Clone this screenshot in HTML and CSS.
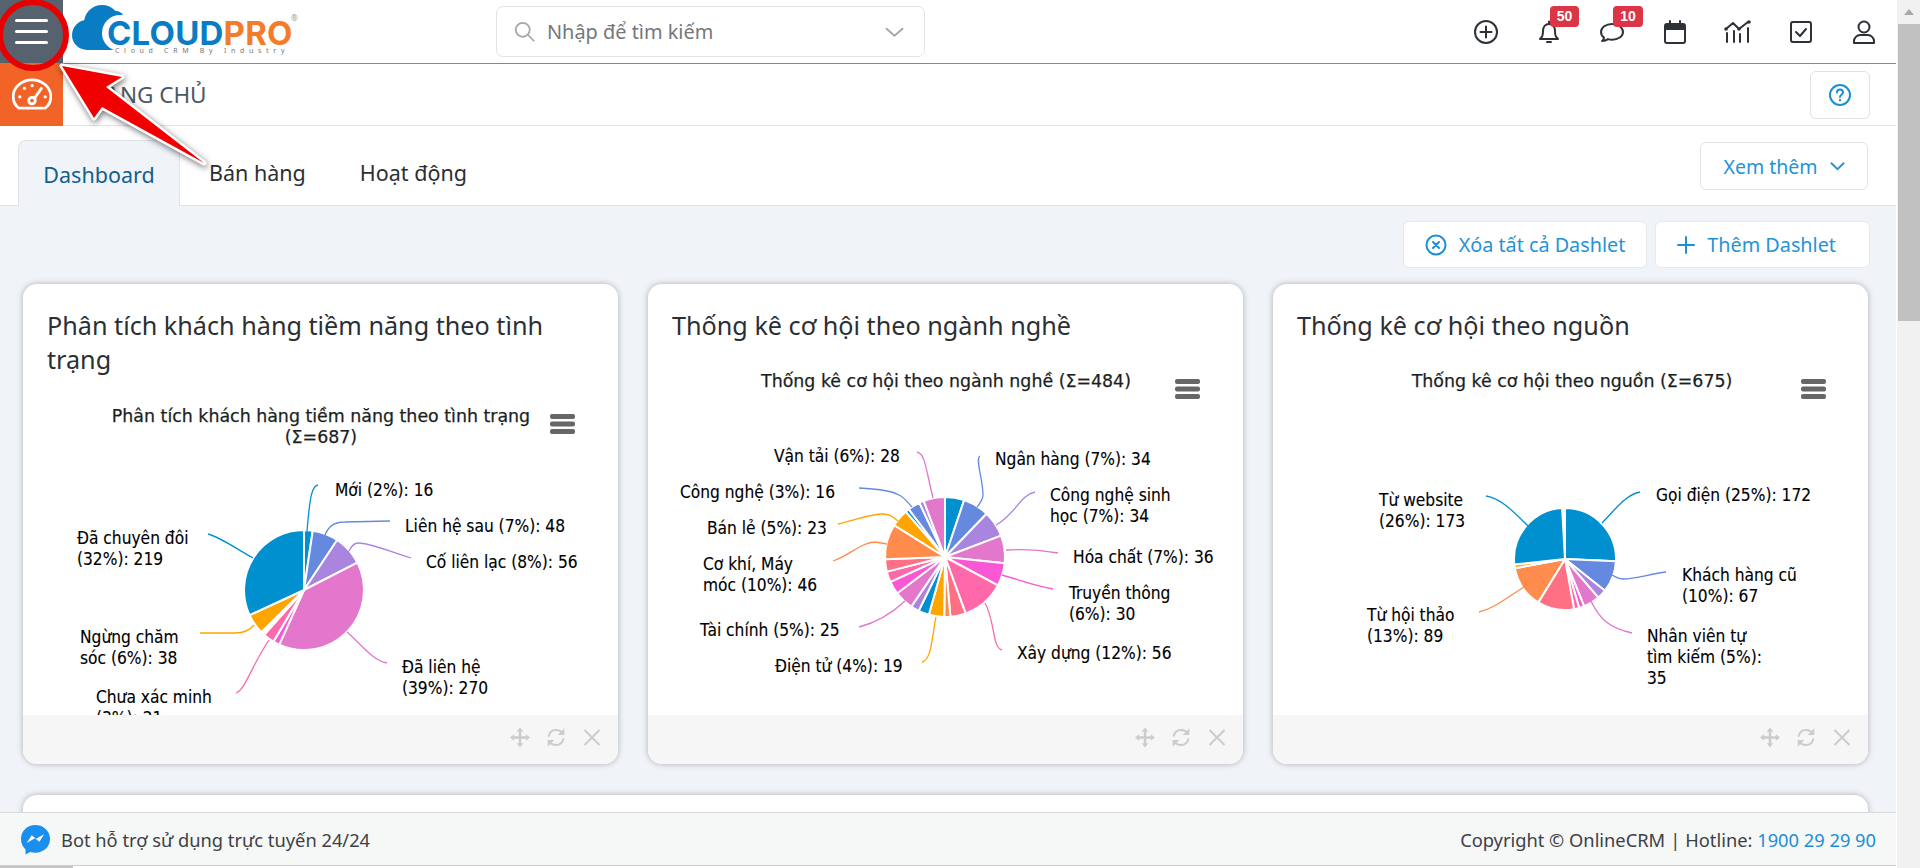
FILE: index.html
```html
<!DOCTYPE html>
<html lang="vi">
<head>
<meta charset="utf-8">
<title>CloudPro - Trang chủ</title>
<link rel="stylesheet" href="styles.css">
</head>
<body>
<div class="shell">
  <div class="page">
    <header class="topbar">
      <button class="menu-btn" aria-label="Menu"><span></span><span></span><span></span></button>
      <a class="logo">
        <svg class="logo-cloud" viewBox="0 0 60 48"><g class="logo-blue"><circle cx="15" cy="30" r="15"/><circle cx="30" cy="18" r="18"/><circle cx="44" cy="14" r="8"/><rect x="15" y="25" width="35" height="20"/></g><circle class="logo-cut" cx="48" cy="28" r="18"/></svg>
        <span class="logo-text"><span class="logo-c">CLOUD</span><span class="logo-p">PRO</span></span>
        <span class="logo-r">®</span>
        <span class="logo-tag">Cloud CRM By Industry</span>
      </a>
      <div class="search">
        <svg class="search-ico" viewBox="0 0 24 24"><circle cx="10" cy="10" r="8"/><path d="M16 16l7 7"/></svg>
        <span class="search-text">Nhập để tìm kiếm</span>
        <svg class="search-chev" viewBox="0 0 20 12"><path d="M1 2l9 8 9-8"/></svg>
      </div>
      <nav class="top-icons">
        <a class="top-icon"><svg viewBox="0 0 24 24"><circle cx="12" cy="12" r="11"/><path d="M12 6.500v11M6.500 12h11"/></svg></a>
        <a class="top-icon"><svg viewBox="0 0 24 24"><path d="M3 19c2-2 3-3 3-8 0-4 2.500-7 6-7s6 3 6 7c0 5 1 6 3 8z"/><path d="M12 1.500V4M10 22h4"/></svg><span class="badge">50</span></a>
        <a class="top-icon"><svg viewBox="0 0 24 24"><path d="M12 4C6 4 1 7.500 1 12c0 2.300 1.200 4.200 3 5.600-.2 1.500-1 2.800-2 3.400 2.500 0 4.600-.8 6-1.900 1.300.4 2.600.6 4 .6 6 0 11-3.200 11-7.700S18 4 12 4z"/></svg><span class="badge badge-chat">10</span></a>
        <a class="top-icon"><svg viewBox="0 0 24 24"><rect x="2" y="4" width="20" height="19" rx="2"/><path class="ico-solid" d="M2 4h20v6H2z"/><path d="M7 1v4M17 1v4"/></svg></a>
        <a class="top-icon"><svg viewBox="0 0 28 24"><path d="M2 9l7-6 6 6 9-7M3 13v9M10 11v11M16 14v8M24 8v14" /><circle class="ico-solid" cx="2" cy="9" r="1.800"/><circle class="ico-solid" cx="15" cy="9" r="1.800"/><circle class="ico-solid" cx="25" cy="2" r="1.800"/></svg></a>
        <a class="top-icon"><svg viewBox="0 0 24 24"><rect x="2" y="2" width="20" height="20" rx="2"/><path d="M7 12l4 4 6-7"/></svg></a>
        <a class="top-icon"><svg viewBox="0 0 24 24"><circle cx="12" cy="7" r="5.500"/><path d="M2 23v-2c0-3 3-6 6-6h8c3 0 6 3 6 6v2z"/></svg></a>
      </nav>
    </header>

    <div class="subbar">
      <div class="module-ico">
        <svg viewBox="0 0 42 34"><path d="M9 32h24M7 32C3 29 1 25 1 20 1 10 10 2 21 2s20 8 20 18c0 5-2 9-6 12"/><circle cx="21" cy="24" r="3.500"/><path d="M24 21l7-10"/><path class="dots" d="M8 20h.1M13 11h.1M21 8h.1M35 20h.1"/></svg>
      </div>
      <h1 class="module-title">TRANG CHỦ</h1>
      <button class="help-btn" aria-label="Trợ giúp"><svg viewBox="0 0 24 24"><circle cx="12" cy="12" r="10"/><path d="M9 9.500c0-2 1.300-3 3-3s3 1 3 2.800c0 2.400-3 2.400-3 4.700M12 16.800v.8"/></svg></button>
    </div>

    <div class="tabbar">
      <a class="tab tab-active">Dashboard</a>
      <a class="tab">Bán hàng</a>
      <a class="tab">Hoạt động</a>
      <button class="more-btn">Xem thêm <svg viewBox="0 0 16 10"><path d="M1 1.500l7 7 7-7"/></svg></button>
    </div>

    <main class="content">
      <div class="actions">
        <button class="action-btn"><svg viewBox="0 0 22 22"><circle cx="11" cy="11" r="9.500"/><path d="M8 8l6 6M14 8l-6 6"/></svg>Xóa tất cả Dashlet</button>
        <button class="action-btn action-add"><svg class="plus" viewBox="0 0 18 18"><path d="M9 1v16M1 9h16"/></svg>Thêm Dashlet</button>
      </div>

      <div class="cards">
        <section class="card">
          <div class="card-body">
            <h2 class="card-title">Phân tích khách hàng tiềm năng theo tình trạng</h2>
            <svg class="chart chart-tall" viewBox="23 392 595 323">
              <text class="chart-title" x="321" y="422">Phân tích khách hàng tiềm năng theo tình trạng</text>
              <text class="chart-title" x="321" y="443">(Σ=687)</text>
              <g class="burger"><rect x="550" y="414" width="25" height="5" rx="2"/><rect x="550" y="421.500" width="25" height="5" rx="2"/><rect x="550" y="429" width="25" height="5" rx="2"/></g>
              <g class="pie" data-cx="304" data-cy="590" data-r="60" data-total="687" data-values="16,48,56,270,12,21,4,3,38,219"></g>
              <path class="ln c1" d="M318 485C312 486 310 495 307 531"/>
              <path class="ln c2" d="M390 521L345 522C332 522 328 528 325 535"/>
              <path class="ln c3" d="M411 558C385 550 370 543 358 543C354 543 351 547 349 551"/>
              <path class="ln c4" d="M387 663C372 660 362 645 347 632"/>
              <path class="ln c6" d="M236 693C245 690 252 665 269 640"/>
              <path class="ln c9" d="M200 633L235 633C245 633 250 630 254 625"/>
              <path class="ln c1" d="M208 534C220 537 235 548 253 558"/>
              <text class="lbl" x="335" y="496">Mới (2%): 16</text>
              <text class="lbl" x="405" y="532">Liên hệ sau (7%): 48</text>
              <text class="lbl" x="426" y="568">Cố liên lạc (8%): 56</text>
              <text class="lbl" x="77" y="544">Đã chuyên đôi</text>
              <text class="lbl" x="77" y="565">(32%): 219</text>
              <text class="lbl" x="80" y="643">Ngừng chăm</text>
              <text class="lbl" x="80" y="664">sóc (6%): 38</text>
              <text class="lbl" x="96" y="703">Chưa xác minh</text>
              <text class="lbl" x="96" y="724">(3%): 21</text>
              <text class="lbl" x="402" y="673">Đã liên hệ</text>
              <text class="lbl" x="402" y="694">(39%): 270</text>
            </svg>
          </div>
          <footer class="card-foot">
            <svg viewBox="0 0 24 24"><path class="solid" d="M12 0l4 5h-2.500v5.500H19V8l5 4-5 4v-2.500h-5.500V19H16l-4 5-4-5h2.500v-5.500H5V16l-5-4 5-4v2.500h5.500V5H8z"/></svg>
            <svg viewBox="0 0 24 24"><path d="M3 11c1-5 4-8 9-8 3 0 6 1 8 4M21 13c-1 5-4 8-9 8-3 0-6-1-8-4"/><path class="solid" d="M22 1v8h-8zM2 23v-8h8z"/></svg>
            <svg viewBox="0 0 24 24"><path d="M3 3l18 18M21 3L3 21"/></svg>
          </footer>
        </section>

        <section class="card">
          <div class="card-body">
            <h2 class="card-title">Thống kê cơ hội theo ngành nghề</h2>
            <svg class="chart" viewBox="648 358 595 357">
              <text class="chart-title" x="946" y="387">Thống kê cơ hội theo ngành nghề (Σ=484)</text>
              <g class="burger"><rect x="1175" y="379" width="25" height="5" rx="2"/><rect x="1175" y="386.500" width="25" height="5" rx="2"/><rect x="1175" y="394" width="25" height="5" rx="2"/></g>
              <g class="pie" data-cx="945" data-cy="557" data-r="60" data-total="484" data-values="25,34,34,36,30,56,20,8,20,14,0,11,25,17,14,16,46,23,5,16,6,28"></g>
              <path class="ln c4" d="M917 452C925 454 925 465 933 498"/>
              <path class="ln c2" d="M980 456C975 458 983 480 983 495C983 500 980 503 977 507"/>
              <path class="ln c3" d="M1035 492C1020 495 1015 515 996 525"/>
              <path class="ln c4" d="M1058 553C1040 550 1020 549 1006 550"/>
              <path class="ln c5" d="M1053 589C1035 586 1020 580 1002 575"/>
              <path class="ln c6" d="M1002 650C992 648 995 620 985 603"/>
              <path class="ln c4" d="M859 627C875 623 890 615 905 601"/>
              <path class="ln c9" d="M922 662C932 660 932 635 936 617"/>
              <path class="ln c8" d="M833 561C850 555 862 542 875 542L887 544"/>
              <path class="ln c9" d="M838 524C855 520 870 514 883 514C890 514 893 517 898 521"/>
              <path class="ln c2" d="M859 488C875 489 890 490 899 495C905 498 908 503 912 507"/>
              <text class="lbl" x="774" y="462">Vận tải (6%): 28</text>
              <text class="lbl" x="995" y="465">Ngân hàng (7%): 34</text>
              <text class="lbl" x="1050" y="501">Công nghệ sinh</text>
              <text class="lbl" x="1050" y="522">học (7%): 34</text>
              <text class="lbl" x="680" y="498">Công nghệ (3%): 16</text>
              <text class="lbl" x="707" y="534">Bán lẻ (5%): 23</text>
              <text class="lbl" x="1073" y="563">Hóa chất (7%): 36</text>
              <text class="lbl" x="703" y="570">Cơ khí, Máy</text>
              <text class="lbl" x="703" y="591">móc (10%): 46</text>
              <text class="lbl" x="1069" y="599">Truyền thông</text>
              <text class="lbl" x="1069" y="620">(6%): 30</text>
              <text class="lbl" x="700" y="636">Tài chính (5%): 25</text>
              <text class="lbl" x="1017" y="659">Xây dựng (12%): 56</text>
              <text class="lbl" x="775" y="672">Điện tử (4%): 19</text>
            </svg>
          </div>
          <footer class="card-foot">
            <svg viewBox="0 0 24 24"><path class="solid" d="M12 0l4 5h-2.500v5.500H19V8l5 4-5 4v-2.500h-5.500V19H16l-4 5-4-5h2.500v-5.500H5V16l-5-4 5-4v2.500h5.500V5H8z"/></svg>
            <svg viewBox="0 0 24 24"><path d="M3 11c1-5 4-8 9-8 3 0 6 1 8 4M21 13c-1 5-4 8-9 8-3 0-6-1-8-4"/><path class="solid" d="M22 1v8h-8zM2 23v-8h8z"/></svg>
            <svg viewBox="0 0 24 24"><path d="M3 3l18 18M21 3L3 21"/></svg>
          </footer>
        </section>

        <section class="card">
          <div class="card-body">
            <h2 class="card-title">Thống kê cơ hội theo nguồn</h2>
            <svg class="chart" viewBox="1273 358 595 357">
              <text class="chart-title" x="1572" y="387">Thống kê cơ hội theo nguồn (Σ=675)</text>
              <g class="burger"><rect x="1801" y="379" width="25" height="5" rx="2"/><rect x="1801" y="386.500" width="25" height="5" rx="2"/><rect x="1801" y="394" width="25" height="5" rx="2"/></g>
              <g class="pie" data-cx="1565" data-cy="559" data-r="51" data-total="670" data-values="172,67,20,35,11,11,78,89,8,173"></g>
              <path class="ln c1" d="M1640 492C1625 495 1615 510 1602 523"/>
              <path class="ln c1" d="M1486 496C1500 498 1512 510 1528 526"/>
              <path class="ln c2" d="M1666 572C1650 574 1635 579 1623 579C1618 579 1616 577 1612 575"/>
              <path class="ln c4" d="M1632 633C1610 628 1600 620 1591 601"/>
              <path class="ln c8" d="M1479 612C1495 608 1508 597 1524 587"/>
              <text class="lbl" x="1656" y="501">Gọi điện (25%): 172</text>
              <text class="lbl" x="1379" y="506">Từ website</text>
              <text class="lbl" x="1379" y="527">(26%): 173</text>
              <text class="lbl" x="1682" y="581">Khách hàng cũ</text>
              <text class="lbl" x="1682" y="602">(10%): 67</text>
              <text class="lbl" x="1367" y="621">Từ hội thảo</text>
              <text class="lbl" x="1367" y="642">(13%): 89</text>
              <text class="lbl" x="1647" y="642">Nhân viên tự</text>
              <text class="lbl" x="1647" y="663">tìm kiếm (5%):</text>
              <text class="lbl" x="1647" y="684">35</text>
            </svg>
          </div>
          <footer class="card-foot">
            <svg viewBox="0 0 24 24"><path class="solid" d="M12 0l4 5h-2.500v5.500H19V8l5 4-5 4v-2.500h-5.500V19H16l-4 5-4-5h2.500v-5.500H5V16l-5-4 5-4v2.500h5.500V5H8z"/></svg>
            <svg viewBox="0 0 24 24"><path d="M3 11c1-5 4-8 9-8 3 0 6 1 8 4M21 13c-1 5-4 8-9 8-3 0-6-1-8-4"/><path class="solid" d="M22 1v8h-8zM2 23v-8h8z"/></svg>
            <svg viewBox="0 0 24 24"><path d="M3 3l18 18M21 3L3 21"/></svg>
          </footer>
        </section>
      </div>
      <section class="card card-next"></section>
    </main>

    <footer class="botbar">
      <svg class="messenger" viewBox="0 0 32 32"><path class="m-bg" d="M16 1C7.500 1 1 7.200 1 15.500c0 4.300 1.800 8.100 4.700 10.700v5.300l4.800-2.700c1.700.5 3.600.8 5.500.8 8.500 0 15-6.200 15-14.100S24.500 1 16 1z"/><path class="m-fg" d="M7 19.500l5-7.800 4.600 3.500 8.400-4.700-5 7.800-4.600-3.500z"/></svg>
      <span class="bot-text">Bot hỗ trợ sử dụng trực tuyến 24/24</span>
      <span class="copy">Copyright © OnlineCRM<span class="sep">|</span>Hotline: <a class="hot">1900 29 29 90</a></span>
    </footer>
    <div class="hbar"><div class="hthumb"></div></div>

    <svg class="overlay" viewBox="0 0 230 180">
      <ellipse class="ring" cx="33" cy="35" rx="33" ry="33"/>
      <polygon class="arrow" points="62,66 122,77 106,87 204,163 102,107 94,118"/>
    </svg>
  </div>
  <aside class="vscroll"><div class="vbtn"></div><div class="vthumb"></div></aside>
</div>
<script src="pie.js"></script>
</body>
</html>
```

FILE: styles.css
```css
* { box-sizing: border-box; }
html, body { margin: 0; height: 100%; overflow: hidden; }
body { font-family: "Noto Sans", "Open Sans", sans-serif; color: #2b2f33; background: #fff; }
button { font-family: inherit; cursor: pointer; }
.shell { display: flex; height: 868px; width: 1920px; overflow: hidden; }
.page { position: relative; flex: 1; min-width: 0; overflow: hidden; display: flex; flex-direction: column; background: #f0f3f7; }

/* top bar */
.topbar { display: flex; align-items: center; height: 64px; flex: none; background: #fff; border-bottom: 1px solid #e8663a; }
.menu-btn { width: 63px; height: 63px; flex: none; border: 0; padding: 0 15px; background: #56636f; display: flex; flex-direction: column; justify-content: center; gap: 8px; }
.menu-btn span { display: block; height: 3px; width: 33px; border-radius: 2px; background: #fff; }
.logo { position: relative; width: 225px; height: 63px; margin-left: 9px; flex: none; display: block; }
.logo-cloud { position: absolute; left: 0; top: 5px; width: 60px; height: 48px; }
.logo-blue { fill: #0a7cc4; }
.logo-cut { fill: #fff; }
.logo-text { position: absolute; left: 35px; top: 20px; height: 26px; display: flex; font-family: "Inter", "Lato", sans-serif; font-weight: 700; font-size: 33px; line-height: 26px; letter-spacing: .2px; white-space: nowrap; }
.logo-c { display: block; height: 26px; color: #0a7cc4; }
.logo-p { display: block; height: 26px; color: #f47b2a; }
.logo-r { position: absolute; left: 219px; top: 14px; font-size: 8px; line-height: 8px; color: #999; }
.logo-tag { position: absolute; left: 43px; top: 47px; font-size: 7px; line-height: 8px; letter-spacing: 4.700px; color: #777; white-space: nowrap; }
.search { width: 429px; height: 51px; flex: none; margin-left: 199px; display: flex; align-items: center; padding: 0 20px 0 17px; border: 1px solid #e1e3e5; border-radius: 7px; background: #fff; }
.search-ico { width: 21px; height: 21px; flex: none; fill: none; stroke: #a5a8aa; stroke-width: 2; }
.search-text { margin-left: 12px; font-size: 19.900px; color: #73787d; flex: 1; }
.search-chev { width: 19px; height: 12px; fill: none; stroke: #a5a8aa; stroke-width: 2; }
.top-icons { margin-left: auto; margin-right: 1px; display: flex; }
.top-icon { position: relative; width: 63px; height: 63px; display: flex; align-items: center; justify-content: center; }
.top-icon svg { height: 24px; width: auto; fill: none; stroke: #2d3238; stroke-width: 2; stroke-linecap: round; stroke-linejoin: round; }
.top-icon .ico-solid { fill: #2d3238; stroke: none; }
.badge { position: absolute; left: 33px; top: 6px; width: 29px; height: 21px; border-radius: 4px; background: #dc3545; color: #fff; font: 700 14px/21px "Liberation Sans", sans-serif; text-align: center; }
.badge-chat { width: 30px; }

/* sub bar */
.subbar { display: flex; align-items: center; height: 62px; flex: none; background: #fff; border-bottom: 1px solid #e0e3e6; }
.module-ico { width: 63px; height: 62px; flex: none; background: #f26328; display: flex; align-items: center; justify-content: center; }
.module-ico svg { width: 40px; height: 32px; margin-top: -2px; fill: none; stroke: #fff; stroke-width: 3; stroke-linecap: round; }
.module-ico .dots { stroke-width: 3.500; }
.module-title { margin: 0 0 0 16px; font-size: 22.500px; font-weight: 400; color: #4a5866; }
.help-btn { margin-left: auto; margin-right: 26px; width: 60px; height: 48px; background: #fff; border: 1px solid #e0e3e6; border-radius: 6px; display: flex; align-items: center; justify-content: center; padding: 0; }
.help-btn svg { width: 24px; height: 24px; fill: none; stroke: #1a8fd6; stroke-width: 2; stroke-linecap: round; }

/* tabs */
.tabbar { display: flex; align-items: flex-end; height: 80px; flex: none; background: #fff; border-bottom: 1px solid #e0e3e6; padding-left: 18px; }
.tab { height: 65px; padding: 0 27px; font-size: 21.500px; line-height: 66px; color: #2b2f33; }
.tab-active { width: 162px; padding: 0; text-align: center; margin-bottom: -1px; height: 66px; background: #f0f3f7; border: 1px solid #e0e3e6; border-bottom: 0; border-radius: 8px 8px 0 0; color: #125f8f; line-height: 67px; margin-right: 2px; }
.more-btn { margin: 0 28px 15px auto; width: 168px; height: 48px; padding: 0; background: #fff; border: 1px solid #e0e3e6; border-radius: 6px; color: #2493d8; font-size: 19.500px; display: flex; align-items: center; justify-content: center; gap: 12px; }
.more-btn svg { width: 15px; height: 10px; fill: none; stroke: #2493d8; stroke-width: 2; }

/* content */
.content { flex: 1; min-height: 0; padding: 15px 28px 0 23px; }
.actions { display: flex; justify-content: flex-end; gap: 8px; margin-right: -2px; }
.action-btn { height: 47px; padding: 0 21px; background: #fff; border: 1px solid #e6e8eb; border-radius: 6px; color: #2493d8; font-size: 19.800px; display: flex; align-items: center; gap: 12px; }
.action-add { padding-right: 33px; }
.action-btn svg { width: 22px; height: 22px; fill: none; stroke: #1a8fd6; stroke-width: 2; stroke-linecap: round; }
.action-btn svg.plus { width: 18px; height: 18px; }
.cards { display: grid; grid-template-columns: repeat(3, 595px); gap: 30px; margin-top: 16px; }
.card { background: #fff; border-radius: 14px; box-shadow: 0 0 6px rgba(0, 0, 0, .28); overflow: hidden; display: flex; flex-direction: column; height: 480px; }
.card-next { margin-top: 31px; height: 120px; }
.card-body { height: 431px; flex: none; overflow: hidden; }
.card-title { margin: 0; padding: 24px 24px 16px; font-size: 25.200px; line-height: 34px; font-weight: 400; color: #2b2f33; }
.chart { display: block; width: 595px; height: 357px; }
.chart-tall { height: 323px; }
.chart-title { font-family: "DejaVu Sans", sans-serif; font-size: 17.400px; font-weight: 400; fill: #1c1f22; text-anchor: middle; stroke: #1c1f22; stroke-width: .25px; }
.lbl { font-family: "DejaVu Sans", sans-serif; font-stretch: condensed; font-size: 17.200px; fill: #000; stroke: #000; stroke-width: .12px; }
.burger rect { fill: #666; }
.ln { fill: none; stroke-width: 1.300px; }
.c1 { stroke: #0090d0; } .c2 { stroke: #6689e0; } .c3 { stroke: #a985e0; } .c4 { stroke: #e277cc; } .c5 { stroke: #f957d3; }
.c6 { stroke: #ff69a9; } .c7 { stroke: #ff7085; } .c8 { stroke: #ff8c4d; } .c9 { stroke: #ffa500; }
.pie path { stroke: #fff; stroke-width: 2px; stroke-linejoin: round; }
.card-foot { flex: 1; background: #f6f6f6; display: flex; align-items: center; justify-content: flex-end; gap: 16px; padding: 0 16px 4px 0; }
.card-foot svg { width: 20px; height: 21px; fill: none; stroke: #ccc; stroke-width: 2.500; }
.card-foot .solid { fill: #ccc; stroke: none; }

/* bottom */
.botbar { position: absolute; left: 0; right: 0; top: 812px; height: 53px; background: #f6f7f7; border-top: 1px solid #d8dadc; display: flex; align-items: center; padding: 0 20px 0 20px; }
.messenger { width: 31px; height: 31px; flex: none; }
.m-bg { fill: #1a8ff0; }
.m-fg { fill: #fff; }
.bot-text { margin-left: 10px; font-size: 18.300px; color: #3c4146; }
.copy { margin-left: auto; font-size: 18.300px; color: #3c4146; }
.sep { margin: 0 5px; }
.hot { color: #1a8fd6; }
.hbar { position: absolute; left: 0; right: 0; bottom: 0; height: 3px; background: #fff; border-top: 1px solid #cfcfcf; }
.hthumb { width: 73px; height: 3px; background: #c4c4c4; }
.vscroll { position: relative; width: 24px; flex: none; background: #f1f1f1; border-left: 1px solid #fff; }
.vbtn { width: 0; height: 0; margin: 9px auto 0; border: 5.500px solid transparent; border-top: 0; border-bottom: 6px solid #a8a8a8; }
.vthumb { margin-top: 9px; height: 297px; margin-left: 1px; background: #c1c1c1; }

/* annotation */
.overlay { position: absolute; left: 0; top: 0; width: 230px; height: 180px; overflow: visible; pointer-events: none; }
.ring { fill: none; stroke: #e60000; stroke-width: 6px; }
.arrow { fill: #f00000; stroke: #fff; stroke-width: 5px; stroke-linejoin: round; paint-order: stroke; filter: drop-shadow(1px 2px 3px rgba(0, 0, 0, .55)); }
```

FILE: pie.js
```js
var NS = 'http://www.w3.org/2000/svg';
var PALETTE = ['#0090d0', '#6689e0', '#a985e0', '#e277cc', '#f957d3', '#ff69a9', '#ff7085', '#ff8c4d', '#ffa500'];

document.querySelectorAll('.pie').forEach(function (pie) {
  var cx = +pie.dataset.cx, cy = +pie.dataset.cy, r = +pie.dataset.r, total = +pie.dataset.total;
  var sum = 0;
  pie.dataset.values.split(',').map(Number).forEach(function (v, i) {
    if (v > 0) {
      var a0 = sum / total * 2 * Math.PI, a1 = (sum + v) / total * 2 * Math.PI;
      var p = document.createElementNS(NS, 'path');
      p.setAttribute('d', 'M' + cx + ' ' + cy +
        'L' + (cx + r * Math.sin(a0)).toFixed(2) + ' ' + (cy - r * Math.cos(a0)).toFixed(2) +
        'A' + r + ' ' + r + ' 0 ' + (a1 - a0 > Math.PI ? 1 : 0) + ' 1 ' +
        (cx + r * Math.sin(a1)).toFixed(2) + ' ' + (cy - r * Math.cos(a1)).toFixed(2) + 'Z');
      p.setAttribute('fill', PALETTE[i % PALETTE.length]);
      pie.appendChild(p);
    }
    sum += v;
  });
});
```
